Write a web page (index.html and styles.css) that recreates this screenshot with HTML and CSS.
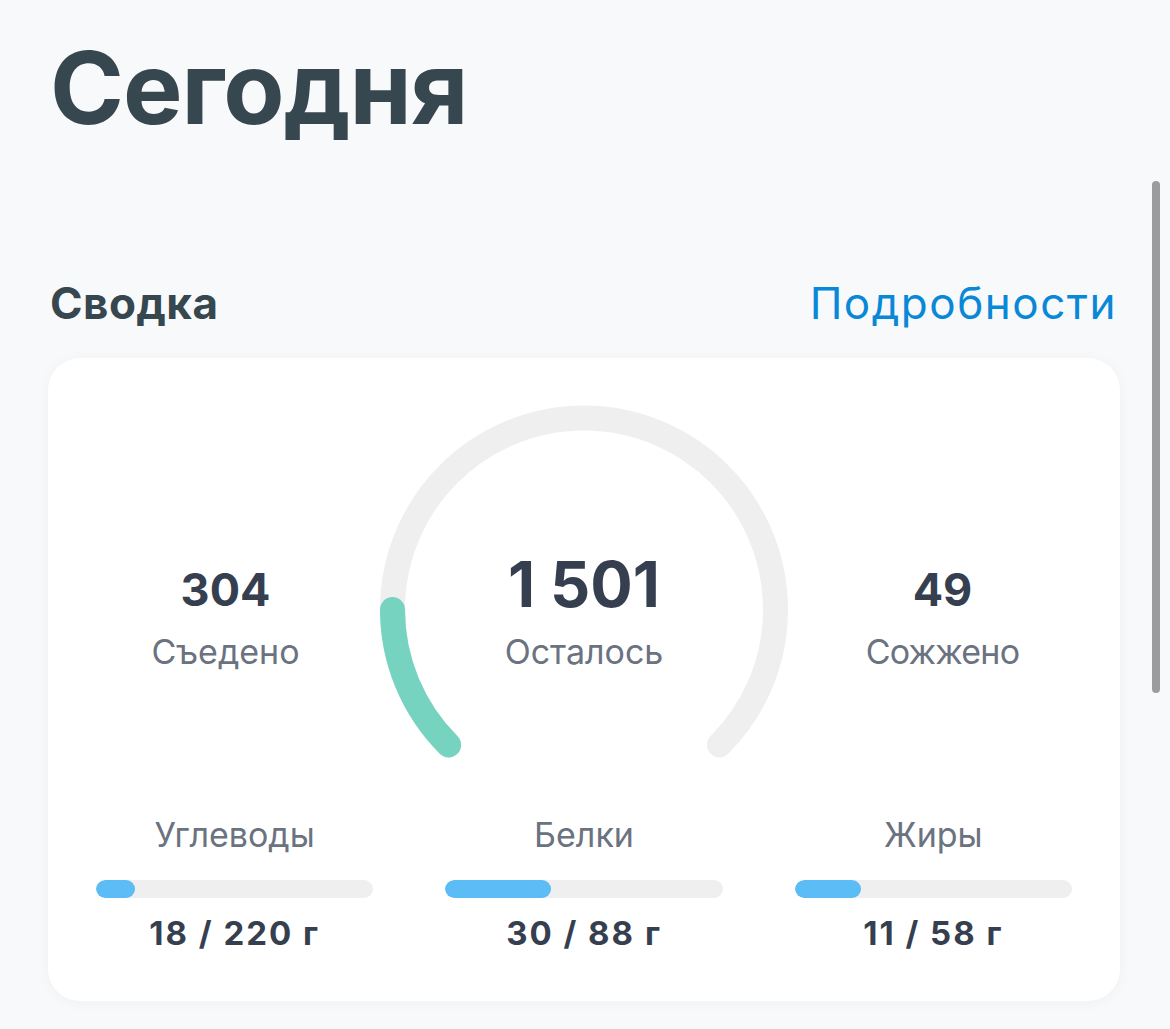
FILE: index.html
```html
<!DOCTYPE html>
<html lang="ru">
<head>
<meta charset="utf-8">
<title>Сегодня</title>
<link rel="stylesheet" href="styles.css">
</head>
<body>
<div class="page">
  <h1 class="title">Сегодня</h1>
  <div class="section-head">
    <h2 class="section-title">Сводка</h2>
    <a class="section-link" href="#">Подробности</a>
  </div>
  <div class="card">
    <div class="stats">
      <div class="stat">
        <div class="stat-num">304</div>
        <div class="stat-label">Съедено</div>
      </div>
      <div class="gauge">
        <svg class="gauge-svg" width="408" height="360" viewBox="0 0 408 360">
          <path d="M 68.6 339.9 A 191.5 191.5 0 1 1 339.4 339.9" fill="none" stroke="#efefef" stroke-width="25" stroke-linecap="round"/>
          <path d="M 68.6 339.9 A 191.5 191.5 0 0 1 12.5 204.5" fill="none" stroke="#76d3c0" stroke-width="25" stroke-linecap="round"/>
        </svg>
        <div class="gauge-center">
          <div class="gauge-num">1 501</div>
          <div class="stat-label">Осталось</div>
        </div>
      </div>
      <div class="stat">
        <div class="stat-num">49</div>
        <div class="stat-label stat-label-narrow">Сожжено</div>
      </div>
    </div>
    <div class="macros">
      <div class="macro">
        <div class="macro-label">Углеводы</div>
        <div class="bar"><div class="bar-fill" style="width:14%"></div></div>
        <div class="macro-value">18 / 220 г</div>
      </div>
      <div class="macro">
        <div class="macro-label">Белки</div>
        <div class="bar"><div class="bar-fill" style="width:38%"></div></div>
        <div class="macro-value">30 / 88 г</div>
      </div>
      <div class="macro">
        <div class="macro-label">Жиры</div>
        <div class="bar"><div class="bar-fill" style="width:24%"></div></div>
        <div class="macro-value">11 / 58 г</div>
      </div>
    </div>
  </div>
</div>
<div class="scrollbar"></div>
</body>
</html>
```

FILE: styles.css
```css
* { box-sizing: border-box; }
html, body {
  margin: 0;
  padding: 0;
  background: #f8f9fb;
  height: 100%;
  overflow: hidden;
}
body {
  font-family: Inter, "Noto Sans", sans-serif;
  color: #363f4f;
}
.page {
  padding: 38px 50px 0 48px;
}
.title {
  margin: 0 0 0 2px;
  font-size: 100px;
  line-height: 1;
  font-weight: 700;
  color: #37474f;
  letter-spacing: -1px;
}
.section-head {
  margin-top: 139px;
  display: flex;
  justify-content: space-between;
  align-items: baseline;
  padding: 0 3px 0 2px;
}
.section-title {
  margin: 0;
  font-size: 44px;
  line-height: 1.2;
  font-weight: 700;
  color: #37474f;
  letter-spacing: 0.5px;
}
.section-link {
  font-size: 44px;
  line-height: 1.2;
  font-weight: 400;
  color: #0a88d8;
  text-decoration: none;
  letter-spacing: 1.5px;
}
.card {
  margin-top: 28px;
  background: #ffffff;
  border-radius: 32px;
  padding: 47px 48px 48px;
  box-shadow: 0 2px 14px rgba(30, 40, 60, 0.04);
}
.stats {
  display: grid;
  grid-template-columns: 1fr 408px 1fr;
  column-gap: 25px;
}
.stat {
  padding-top: 158px;
  text-align: center;
}
.stat-num {
  font-size: 45px;
  line-height: 1.2;
  font-weight: 700;
  color: #363f4f;
}
.stat-label {
  margin-top: 15px;
  font-size: 34px;
  line-height: 1.2;
  font-weight: 400;
  color: #6b7280;
}
.stat-label-narrow {
  letter-spacing: -0.8px;
}
.gauge {
  position: relative;
  height: 360px;
}
.gauge-svg {
  display: block;
}
.gauge-center {
  position: absolute;
  left: 0;
  right: 0;
  top: 142px;
  text-align: center;
}
.gauge-num {
  font-size: 63px;
  line-height: 1.2;
  font-weight: 700;
  color: #363f4f;
}
.gauge-center .stat-label {
  margin-top: 10px;
}
.macros {
  margin-top: 50px;
  display: grid;
  grid-template-columns: repeat(3, 1fr);
  column-gap: 72px;
}
.macro {
  display: flex;
  flex-direction: column;
  align-items: stretch;
  text-align: center;
}
.macro-label {
  font-size: 34px;
  line-height: 1.2;
  color: #6b7280;
}
.bar {
  margin-top: 24px;
  height: 18px;
  border-radius: 9px;
  background: #efefef;
  overflow: hidden;
}
.bar-fill {
  height: 100%;
  border-radius: 9px;
  background: #5bbcf6;
}
.macro-value {
  margin-top: 16px;
  font-size: 33px;
  line-height: 1.2;
  font-weight: 700;
  color: #363f4f;
  letter-spacing: 2px;
}
.scrollbar {
  position: absolute;
  left: 1152px;
  top: 181px;
  width: 8px;
  height: 512px;
  border-radius: 4px;
  background: #9c9c9e;
}
```
